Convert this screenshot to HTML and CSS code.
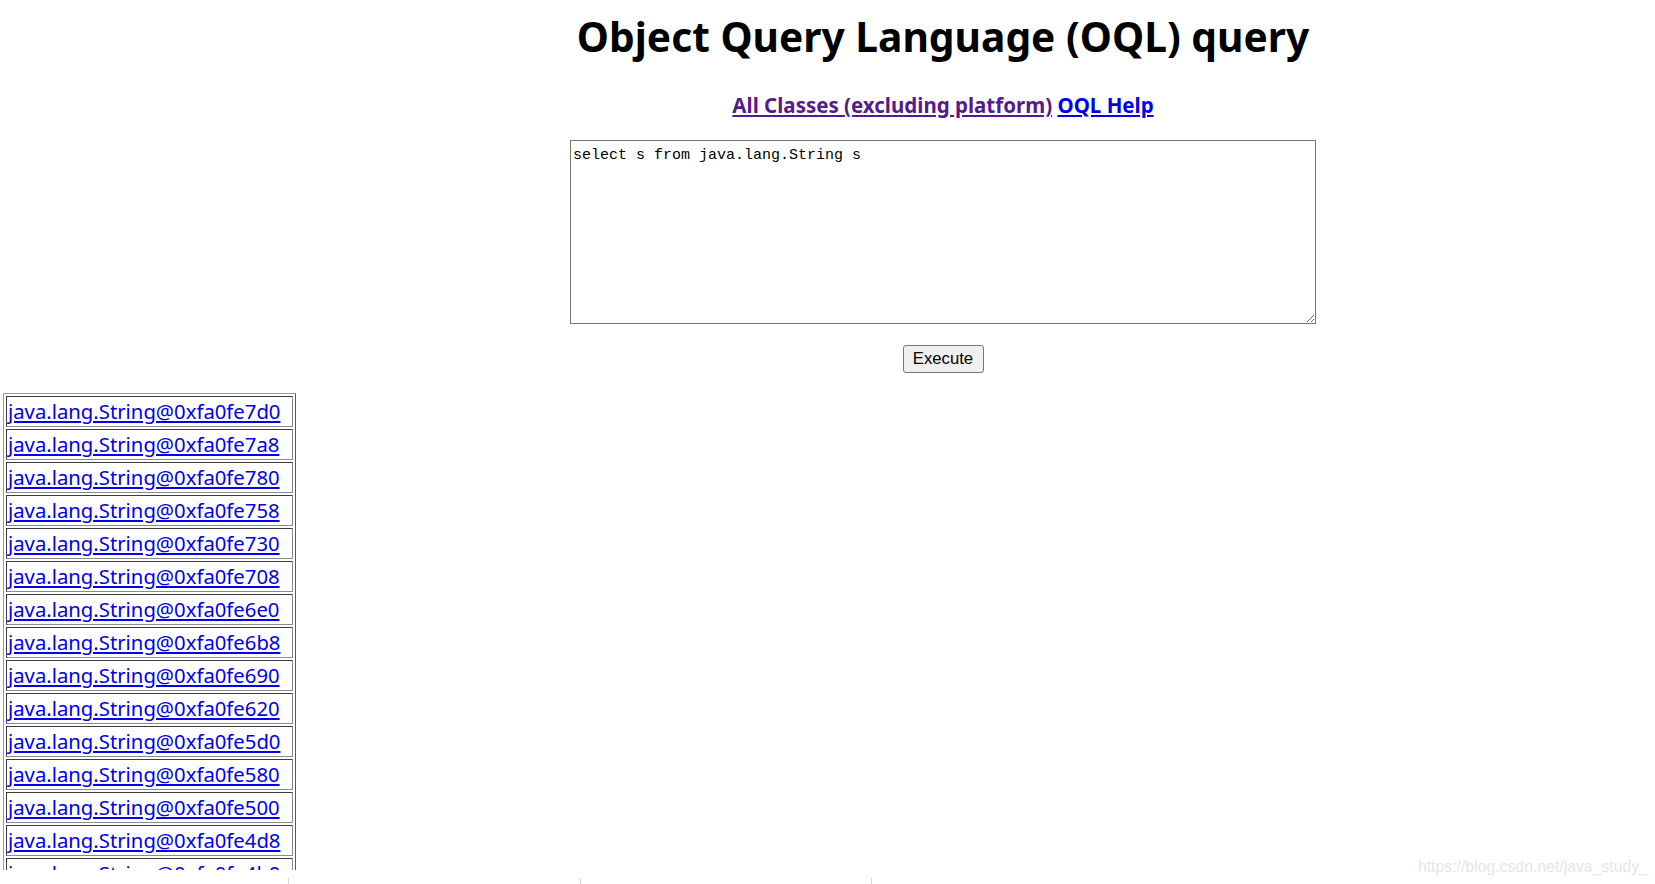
FILE: index.html
```html
<!DOCTYPE html>
<html>
<head>
<meta charset="utf-8">
<title>Object Query Language (OQL) query</title>
<link rel="stylesheet" href="styles.css">
</head>
<body>
<div class="screen">
  <div class="page">
    <div class="top">
      <h1 class="title">Object Query Language (OQL) query</h1>
      <p class="links"><a class="visited" href="#">All Classes (excluding platform)</a>&nbsp;<a class="fresh" href="#">OQL Help</a></p>
      <form class="query-form">
        <p class="field"><textarea class="query" name="query" cols="80" rows="10">select s from java.lang.String s</textarea></p>
        <p class="field"><input class="execute" type="submit" value="Execute"></p>
      </form>
    </div>
    <table class="results">
      <tr><td><a href="#">java.lang.String@0xfa0fe7d0</a></td></tr>
      <tr><td><a href="#">java.lang.String@0xfa0fe7a8</a></td></tr>
      <tr><td><a href="#">java.lang.String@0xfa0fe780</a></td></tr>
      <tr><td><a href="#">java.lang.String@0xfa0fe758</a></td></tr>
      <tr><td><a href="#">java.lang.String@0xfa0fe730</a></td></tr>
      <tr><td><a href="#">java.lang.String@0xfa0fe708</a></td></tr>
      <tr><td><a href="#">java.lang.String@0xfa0fe6e0</a></td></tr>
      <tr><td><a href="#">java.lang.String@0xfa0fe6b8</a></td></tr>
      <tr><td><a href="#">java.lang.String@0xfa0fe690</a></td></tr>
      <tr><td><a href="#">java.lang.String@0xfa0fe620</a></td></tr>
      <tr><td><a href="#">java.lang.String@0xfa0fe5d0</a></td></tr>
      <tr><td><a href="#">java.lang.String@0xfa0fe580</a></td></tr>
      <tr><td><a href="#">java.lang.String@0xfa0fe500</a></td></tr>
      <tr><td><a href="#">java.lang.String@0xfa0fe4d8</a></td></tr>
      <tr><td><a href="#">java.lang.String@0xfa0fe4b0</a></td></tr>
    </table>
  </div>
  <div class="bottom-bar">
    <span class="tick"></span><span class="tick"></span><span class="tick"></span>
  </div>
  <div class="watermark">https://blog.csdn.net/java_study_</div>
</div>
</body>
</html>
```

FILE: styles.css
```css
html, body {
  margin: 0;
  padding: 0;
  background: #fff;
}
body {
  font-family: "Noto Sans", "Open Sans", sans-serif;
  color: #000;
}
.screen {
  position: relative;
  width: 1655px;
  height: 884px;
  overflow: hidden;
}
.page {
  height: 870px;
  overflow: hidden;
  padding-left: 3px;
}
.top {
  padding-left: 228px;
  text-align: center;
}
.title {
  margin: 0;
  padding-top: 10px;
  font-size: 40.7px;
  line-height: 52px;
  font-weight: bold;
}
.links {
  margin: 29px 0 0 0;
  font-size: 20.5px;
  line-height: 28px;
  font-weight: bold;
}
.links a { text-decoration: underline; }
.links .visited { color: #551a8b; }
.links .fresh { color: #0000ee; }
.query-form { margin: 0; }
.field { margin: 0; }
.query {
  box-sizing: border-box;
  display: inline-block;
  vertical-align: top;
  margin-top: 21px;
  width: 746px;
  height: 184px;
  padding: 6px 2px 2px 2px;
  border: 1px solid #767676;
  font-family: "Liberation Mono", monospace;
  font-size: 15px;
  line-height: 18px;
  color: #000;
  background: #fff;
}
.execute {
  box-sizing: border-box;
  margin-top: 21px;
  width: 81px;
  height: 28px;
  padding: 0;
  border: 1px solid #767676;
  border-radius: 3px;
  background: #efefef;
  font-family: "Liberation Sans", Arial, sans-serif;
  font-size: 16.7px;
  color: #000;
}
.results {
  margin-top: 20px;
  border-collapse: separate;
  border-spacing: 2px;
  border: 1px solid;
  border-color: #9a9a9a #5a5a5a #5a5a5a #9a9a9a;
}
.results td {
  box-sizing: border-box;
  width: 287px;
  height: 31px;
  padding: 0 1px;
  border: 1px solid;
  border-color: #3c3c3c #8a8a8a #8a8a8a #3c3c3c;
  font-size: 20.3px;
  line-height: 27px;
  white-space: nowrap;
}
.results a { color: #0000ee; text-decoration: underline; }
.bottom-bar {
  position: relative;
  height: 14px;
}
.tick {
  position: absolute;
  bottom: 0;
  width: 1px;
  height: 6px;
  background: #d4d4d4;
}
.tick:nth-child(1) { left: 288px; }
.tick:nth-child(2) { left: 580px; }
.tick:nth-child(3) { left: 871px; }
.watermark {
  position: absolute;
  right: 7px;
  bottom: 8px;
  font-family: "Liberation Sans", Arial, sans-serif;
  font-size: 15.8px;
  color: #e6e6e6;
}
```
